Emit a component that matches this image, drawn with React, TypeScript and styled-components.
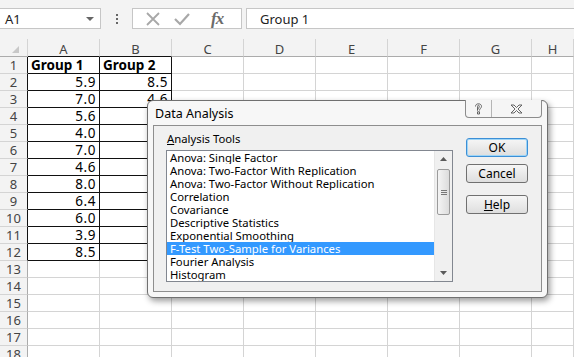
import React from 'react'
import styled, { createGlobalStyle } from 'styled-components'

const GlobalStyle = createGlobalStyle`
  html, body {
    margin: 0;
    padding: 0;
    background: #ffffff;
  }
  body {
    width: 574px;
    height: 357px;
    overflow: hidden;
    font-family: "Noto Sans", "Open Sans", sans-serif;
  }
`

const COLS = ['A', 'B', 'C', 'D', 'E', 'F', 'G', 'H']
const ROWS = 18

const colA = ['Group 1', '5.9', '7.0', '5.6', '4.0', '7.0', '4.6', '8.0', '6.4', '6.0', '3.9', '8.5']
const colB = ['Group 2', '8.5', '4.6', '5.2', '7.1', '6.3', '5.5', '6.9', '7.4', '4.8', '6.6', '5.0']

const tools = [
  'Anova: Single Factor',
  'Anova: Two-Factor With Replication',
  'Anova: Two-Factor Without Replication',
  'Correlation',
  'Covariance',
  'Descriptive Statistics',
  'Exponential Smoothing',
  'F-Test Two-Sample for Variances',
  'Fourier Analysis',
  'Histogram',
]

const Page = styled.div`
  position: relative;
  width: 574px;
  height: 357px;
  overflow: hidden;
  background: #ffffff;
`

const FormulaBar = styled.div`
  height: 39px;
  background: #f3f3f3;
  display: flex;
  align-items: flex-start;
  padding-top: 8px;
  box-sizing: border-box;
`

const NameBox = styled.div`
  width: 101px;
  height: 21px;
  box-sizing: border-box;
  background: #fff;
  border: 1px solid #c6c6c6;
  border-left: 0;
  display: flex;
  align-items: center;
  justify-content: space-between;
  padding: 0 6px 0 5px;
  font-size: 13px;
  color: #222;
`

const DropArrow = styled.span`
  width: 0;
  height: 0;
  border-left: 4px solid transparent;
  border-right: 4px solid transparent;
  border-top: 4px solid #666;
`

const Dots = styled.div`
  width: 31px;
  height: 21px;
  display: flex;
  flex-direction: column;
  align-items: center;
  justify-content: center;
  gap: 2px;
  & > span {
    width: 2px;
    height: 2px;
    background: #666;
  }
`

const FxBox = styled.div`
  width: 110px;
  height: 21px;
  box-sizing: border-box;
  background: #fff;
  border: 1px solid #c6c6c6;
  display: flex;
  align-items: center;
  padding-left: 12px;
  gap: 12px;
`

const Fx = styled.span`
  font-family: "Liberation Serif", serif;
  font-style: italic;
  font-weight: bold;
  font-size: 17px;
  color: #6b6b6b;
  margin-left: 8px;
  letter-spacing: -1px;
`

const FormulaInput = styled.div`
  flex: 1;
  height: 21px;
  margin-left: 4px;
  box-sizing: border-box;
  background: #fff;
  border: 1px solid #c6c6c6;
  border-right: 0;
  display: flex;
  align-items: center;
  padding-left: 13px;
  font-size: 13px;
  color: #222;
`

const Sheet = styled.div`
  display: grid;
  grid-template-columns: 28px repeat(7, 72px) 42px;
  grid-template-rows: 18px;
  grid-auto-rows: 17px;
  font-family: "Noto Sans", sans-serif;
`

const HeadCell = styled.div<{ $dark?: boolean }>`
  background: #f3f3f3;
  box-sizing: border-box;
  border-right: 1px solid #d4d4d4;
  border-bottom: 1px solid ${(p) => (p.$dark ? '#111' : '#ababab')};
  display: flex;
  align-items: center;
  justify-content: center;
  padding-top: 2px;
  font-size: 13px;
  color: #444;
`

const Corner = styled(HeadCell)`
  justify-content: flex-end;
  align-items: flex-end;
  padding: 0 8px 3px 0;
  & > span {
    width: 0;
    height: 0;
    border-left: 7px solid transparent;
    border-bottom: 7px solid #c8c8c8;
  }
`

const RowHead = styled.div<{ $dark?: boolean }>`
  background: #f3f3f3;
  box-sizing: border-box;
  border-right: 1px solid ${(p) => (p.$dark ? '#111' : '#ababab')};
  border-bottom: 1px solid #d4d4d4;
  display: flex;
  align-items: center;
  justify-content: center;
  font-size: 13px;
  line-height: 16px;
  color: #444;
`

const Cell = styled.div<{ $dark?: boolean; $bold?: boolean; $num?: boolean }>`
  box-sizing: border-box;
  border-right: 1px solid ${(p) => (p.$dark ? '#111' : '#d4d4d4')};
  border-bottom: 1px solid ${(p) => (p.$dark ? '#111' : '#d4d4d4')};
  display: flex;
  align-items: center;
  justify-content: ${(p) => (p.$num ? 'flex-end' : 'flex-start')};
  padding: 0 3px;
  font-size: 13.5px;
  line-height: 16px;
  font-weight: ${(p) => (p.$bold ? 700 : 400)};
  color: #000;
  letter-spacing: ${(p) => (p.$num ? '0.6px' : '0')};
`

/* dialog */

const Dialog = styled.div`
  position: absolute;
  left: 147px;
  top: 100px;
  width: 401px;
  height: 198px;
  box-sizing: border-box;
  background: #f7f7f7;
  border: 1px solid #707070;
  border-radius: 6px;
  box-shadow: 2px 3px 6px rgba(0, 0, 0, 0.4);
  display: flex;
  flex-direction: column;
  padding: 0 5px 5px 5px;
  font-family: "Noto Sans", sans-serif;
  font-size: 11.3px;
  color: #000;
`

const TitleBar = styled.div`
  height: 24px;
  display: flex;
  align-items: flex-start;
  justify-content: space-between;
`

const Title = styled.div`
  padding: 4px 0 0 2px;
  font-size: 12.5px;
  line-height: 17px;
`

const CaptionButtons = styled.div`
  display: flex;
  height: 17px;
  margin-top: -1px;
  border: 1px solid #8c8c8c;
  border-top: 0;
  border-radius: 0 0 4px 4px;
  background: #f5f5f5;
`

const CaptionButton = styled.div<{ $wide?: boolean }>`
  width: ${(p) => (p.$wide ? '49px' : '25px')};
  display: flex;
  align-items: center;
  justify-content: center;
  & + & {
    border-left: 1px solid #b5b5b5;
  }
`

const Panel = styled.div`
  flex: 1;
  border: 1px solid #8e8e8e;
  background: #f0f0f0;
  display: flex;
  padding: 3px 12px 9px 12px;
  gap: 13px;
`

const LeftCol = styled.div`
  display: flex;
  flex-direction: column;
  gap: 2px;
`

const Label = styled.div`
  height: 19px;
  display: flex;
  align-items: center;
  padding-left: 1px;
  line-height: 15px;
`

const ListBox = styled.div`
  width: 287px;
  height: 132px;
  box-sizing: border-box;
  border: 1px solid #828790;
  background: #fff;
  display: flex;
`

const Items = styled.div`
  flex: 1;
`

const Item = styled.div<{ $selected?: boolean }>`
  height: 13px;
  line-height: 13px;
  padding-left: 3px;
  white-space: nowrap;
  overflow: hidden;
  background: ${(p) => (p.$selected ? '#3399ff' : 'transparent')};
  color: ${(p) => (p.$selected ? '#fff' : '#000')};
`

const ScrollBar = styled.div`
  width: 17px;
  background: #f0f0f0;
  border-left: 1px solid #e6e6e6;
  display: flex;
  flex-direction: column;
  align-items: center;
`

const ArrowBtn = styled.div`
  height: 16px;
  width: 100%;
  display: flex;
  align-items: center;
  justify-content: center;
`

const Thumb = styled.div`
  width: 13px;
  height: 46px;
  margin-top: 2px;
  box-sizing: border-box;
  border: 1px solid #9b9b9b;
  border-radius: 2px;
  background: linear-gradient(to right, #f4f4f4, #dcdcdc);
  display: flex;
  flex-direction: column;
  align-items: center;
  justify-content: center;
  gap: 1px;
  & > span {
    width: 6px;
    height: 1px;
    background: #777;
  }
`

const Spacer = styled.div`
  flex: 1;
`

const RightCol = styled.div`
  display: flex;
  flex-direction: column;
  padding-top: 9px;
  gap: 7px;
`

const Button = styled.div<{ $default?: boolean; $gapTop?: number }>`
  width: 62px;
  height: 19px;
  box-sizing: border-box;
  border: 1px solid ${(p) => (p.$default ? '#3c8fd6' : '#707070')};
  box-shadow: ${(p) => (p.$default ? 'inset 0 0 0 1px #9ed5f7' : 'none')};
  border-radius: 3px;
  background: linear-gradient(#f6f6f6, #dedede);
  display: flex;
  align-items: center;
  justify-content: center;
  margin-top: ${(p) => p.$gapTop || 0}px;
  font-size: 12px;
  line-height: 15px;
`

const Tri = ({ up }: { up?: boolean }) => (
  <svg width="7" height="4" viewBox="0 0 7 4">
    <path d={up ? 'M0 4 L3.5 0 L7 4 Z' : 'M0 0 L3.5 4 L7 0 Z'} fill="#5a5a5a" />
  </svg>
)

export default function App() {
  return (
    <Page>
      <GlobalStyle />
      <FormulaBar>
        <NameBox>
          A1
          <DropArrow />
        </NameBox>
        <Dots>
          <span />
          <span />
          <span />
        </Dots>
        <FxBox>
          <svg width="16" height="16" viewBox="0 0 16 16">
            <path d="M2 2 L14 14 M14 2 L2 14" stroke="#a8a8a8" strokeWidth="1.8" />
          </svg>
          <svg width="18" height="16" viewBox="0 0 18 16">
            <path d="M2 8 L7 13 L16 3" stroke="#a8a8a8" strokeWidth="2.2" fill="none" />
          </svg>
          <Fx>fx</Fx>
        </FxBox>
        <FormulaInput>Group 1</FormulaInput>
      </FormulaBar>

      <Sheet>
        <Corner>
          <span />
        </Corner>
        {COLS.map((c) => (
          <HeadCell key={c} $dark={c === 'A' || c === 'B'}>
            {c}
          </HeadCell>
        ))}
        {Array.from({ length: ROWS }).map((_, r) => (
          <React.Fragment key={r}>
            <RowHead $dark={r < 12}>{r + 1}</RowHead>
            {COLS.map((c) => {
              const inData = r < 12 && (c === 'A' || c === 'B')
              const val = inData ? (c === 'A' ? colA[r] : colB[r]) : ''
              return (
                <Cell key={c} $dark={inData} $bold={inData && r === 0} $num={inData && r > 0}>
                  {val}
                </Cell>
              )
            })}
          </React.Fragment>
        ))}
      </Sheet>

      <Dialog>
        <TitleBar>
          <Title>Data Analysis</Title>
          <CaptionButtons>
            <CaptionButton>
              <svg width="9" height="12" viewBox="0 0 9 12">
                <path
                  d="M1.5 3.5 C1.5 1.5 3 0.8 4.5 0.8 C6.3 0.8 7.5 2 7.5 3.4 C7.5 5 5.5 5.5 5.5 7.5 M3.5 7.5 C3.5 5.5 5.3 4.8 5.3 3.4 C5.3 2.6 4.9 2.2 4.5 2.2 C3.9 2.2 3.6 2.8 3.6 3.5 Z M3.5 8.8 H5.5 V11 H3.5 Z"
                  stroke="#555"
                  strokeWidth="0.9"
                  fill="none"
                />
              </svg>
            </CaptionButton>
            <CaptionButton $wide>
              <svg width="13" height="10" viewBox="0 0 13 10">
                <path
                  d="M1 1 H4 L6.5 3.5 L9 1 H12 L8 5 L12 9 H9 L6.5 6.5 L4 9 H1 L5 5 Z"
                  stroke="#555"
                  strokeWidth="0.9"
                  fill="none"
                />
              </svg>
            </CaptionButton>
          </CaptionButtons>
        </TitleBar>
        <Panel>
          <LeftCol>
            <Label>
              <span>
                <u>A</u>nalysis Tools
              </span>
            </Label>
            <ListBox>
              <Items>
                {tools.map((t, i) => (
                  <Item key={t} $selected={i === 7}>
                    {t}
                  </Item>
                ))}
              </Items>
              <ScrollBar>
                <ArrowBtn>
                  <Tri up />
                </ArrowBtn>
                <Thumb>
                  <span />
                  <span />
                  <span />
                </Thumb>
                <Spacer />
                <ArrowBtn>
                  <Tri />
                </ArrowBtn>
              </ScrollBar>
            </ListBox>
          </LeftCol>
          <RightCol>
            <Button $default>OK</Button>
            <Button>Cancel</Button>
            <Button $gapTop={5}>
              <span>
                <u>H</u>elp
              </span>
            </Button>
          </RightCol>
        </Panel>
      </Dialog>
    </Page>
  )
}
